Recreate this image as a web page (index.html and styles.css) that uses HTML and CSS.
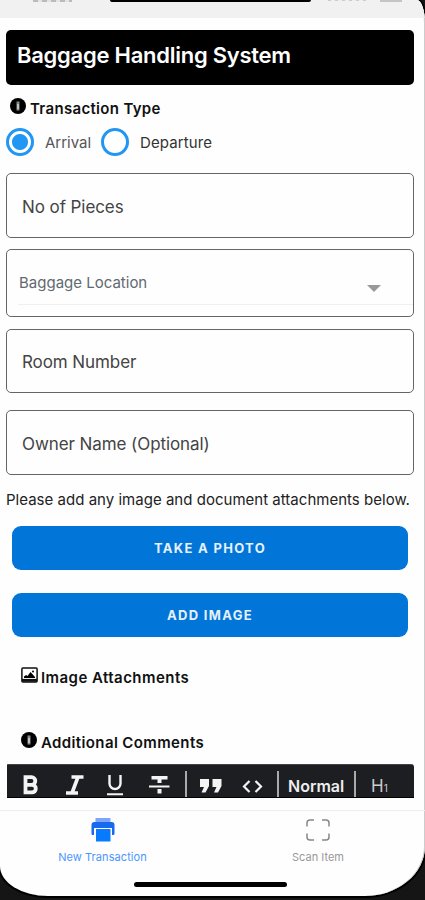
FILE: index.html
```html
<!DOCTYPE html>
<html lang="en">
<head>
<meta charset="utf-8">
<title>Baggage Handling System</title>
<link rel="stylesheet" href="styles.css">
</head>
<body>
<div class="screen">
  <div class="status"><i class="time"></i><i class="notch"></i><i class="signal"></i><i class="battery"></i></div>
  <main class="form">
    <h1 class="title">Baggage Handling System</h1>
    <h2 class="heading type-heading">
      <svg class="info" viewBox="0 0 16 16"><circle cx="8" cy="8" r="8"/><path d="M6.5 3.5h3v9h-3z" fill="#888"/><path d="M7.300 6h1.400v5H7.300z" fill="#ddd"/></svg>
      <span>Transaction Type</span>
    </h2>
    <div class="radios">
      <span class="radio checked"></span><span class="arrival">Arrival</span>
      <span class="radio"></span><span class="departure">Departure</span>
    </div>
    <div class="field pieces"><span>No of Pieces</span></div>
    <div class="field location"><div class="select"><span>Baggage Location</span><svg class="caret" viewBox="0 0 14 7"><path d="M0 0h14L7 7z" fill="#999"/></svg></div></div>
    <div class="field room"><span>Room Number</span></div>
    <div class="field owner"><span>Owner Name (Optional)</span></div>
    <p class="hint">Please add any image and document attachments below.</p>
    <div class="button photo"><span>TAKE A PHOTO</span></div>
    <div class="button add"><span>ADD IMAGE</span></div>
    <h2 class="heading images-heading">
      <svg class="picture" viewBox="0 0 17 16"><rect x=".9" y=".9" width="15.2" height="14.2" rx="1" fill="#fff" stroke="#111" stroke-width="1.5"/><path d="M3 11V9.500l2-1.500 1.500 1L9.500 5l4.500 5v1z"/><circle cx="12" cy="4.600" r="1"/><path d="M1 13.300h15" stroke="#111" stroke-width="2.800"/></svg>
      <span>Image Attachments</span>
    </h2>
    <h2 class="heading comments-heading">
      <svg class="info" viewBox="0 0 16 16"><circle cx="8" cy="8" r="8"/><path d="M6.5 3.5h3v9h-3z" fill="#888"/><path d="M7.300 6h1.400v5H7.300z" fill="#ddd"/></svg>
      <span>Additional Comments</span>
    </h2>
    <div class="toolbar">
      <svg class="tools" viewBox="0 0 178 34">
        <g fill="none" stroke="#f4f4f4">
          <path d="M18.5 14.2h6a3.200 3.200 0 0 1 0 7.600h-6zM18.500 21.800h6.500a3.500 3.500 0 0 1 0 7.600h-6.500z" stroke-width="3.800"/>
          <path d="M64.500 14h12M59 30h12M71 14l-6 16" stroke-width="3.600"/>
          <path d="M102.500 12v8.500a5.500 5.500 0 0 0 11 0V12" stroke-width="2.400"/>
          <path d="M100 31.300h16" stroke-width="2"/>
          <path d="M144.500 14.800h16" stroke-width="3.600"/>
          <path d="M152.500 15v5M152.500 26v4.500" stroke-width="4"/>
          <path d="M142 23.500h20.500" stroke-width="2.200"/>
        </g>
      </svg>
      <i class="divider"></i>
      <svg class="quote" viewBox="0 0 22 14"><path d="M0 0h9v7l-3.500 6.500h-4L4 8H0zM12.500 0h9v7L18 13.500h-4L16.500 8h-4z" fill="#f4f4f4"/></svg>
      <svg class="code" viewBox="0 0 21 13"><path d="M7.500 1 2 6.500 7.500 12M13.500 1 19 6.500 13.500 12" fill="none" stroke="#f4f4f4" stroke-width="2.200"/></svg>
      <i class="divider second"></i>
      <span class="normal">Normal</span>
      <i class="divider third"></i>
      <span class="h1">H<small>1</small></span>
    </div>
  </main>
  <nav class="tabs">
    <div class="tab active">
      <svg viewBox="0 0 24 24"><path d="M4.500 0h15v5h-15z" fill="#7da6f8"/><path d="M.5 7Q.5 4 3.500 4h17q3 0 3 3v9q0 1-1.500 1h-1v-7H3v7H2Q.5 17 .5 16z" fill="#1769ed"/><path d="M5 11h14.500v12.500H5z" fill="#087aff"/></svg>
      <span>New Transaction</span>
    </div>
    <div class="tab">
      <svg viewBox="0 0 24 24"><path d="M1 8.500V5Q1 2 4 2h4M16 2h4q3 0 3 3v3.500M23 15.500V19q0 3-3 3h-4M8 22H4q-3 0-3-3v-3.500" fill="none" stroke="#878787" stroke-width="1.500"/></svg>
      <span>Scan Item</span>
    </div>
  </nav>
  <i class="home"></i>
</div>
</body>
</html>
```
FILE: styles.css
```css
* { box-sizing: border-box; }
body { margin: 0; width: 425px; height: 900px; overflow: hidden; background: #151515; font-family: Inter, sans-serif; color: #111; }
.screen { width: 424.5px; height: 896px; display: flex; flex-direction: column; overflow: hidden; background: #fefefe; box-shadow: inset -1px 0 #ccc, 0 0 0 2px #000; border-radius: 0 8px 60px 48px / 0 24px 50px 30px; }
.status { height: 18px; flex: none; display: flex; align-items: flex-start; background: #f1f1f1; }
.time { width: 39px; height: 2px; margin-left: 33px; background: repeating-linear-gradient(90deg, #bbb 0 5px, #e4e4e4 5px 9px); }
.notch { width: 201px; height: 2px; margin-left: 38px; border-radius: 0 0 3px 3px; background: #000; }
.signal { width: 38px; height: 1px; margin-left: 17px; background: repeating-linear-gradient(90deg, #ccc 0 3px, #eee 3px 7px); }
.battery { width: 22px; height: 2px; margin-left: 14px; background: #c5c5c5; }
.form { height: 792px; flex: none; padding: 12px 10.5px 0 6px; display: flex; flex-direction: column; align-items: stretch; }
.form > * { flex: none; white-space: nowrap; }
.title { margin: 0; height: 55px; padding: 11px 11px 0; border-radius: 5px; background: #000; color: #fff; font-size: 22px; line-height: 28px; font-weight: 600; letter-spacing: -.26px; }
.heading { display: flex; align-items: center; margin: 0; height: 20px; font-size: 15px; font-weight: 600; letter-spacing: .32px; }
.info { width: 16px; height: 16px; flex: none; position: relative; top: -2px; }
.type-heading { margin-top: 13px; padding-left: 10px; padding-left: 4px; gap: 4px; }
.radios { display: flex; align-items: center; height: 28px; margin-top: 10px; font-size: 15px; }
.radio { width: 28px; height: 28px; border: 3px solid #2196f3; border-radius: 50%; background: #fff; }
.checked { background: radial-gradient(circle, #2196f3 0 7.500px, #fff 8.500px); }
.arrival { width: 45px; margin-left: 11px; margin-right: 11px; color: #555; }
.departure { margin-left: 11px; letter-spacing: .1px; color: #333; }
.field { border: 1px solid #656565; border-radius: 5px; display: flex; align-items: center; padding: 2px 0 0 15px; font-size: 17px; letter-spacing: -.08px; color: #444; }
.pieces { height: 65px; margin-top: 17px; }
.location { height: 68px; margin-top: 11px; padding: 0 0 0 11px; align-items: flex-start; font-size: 15px; letter-spacing: 0; color: #626970; }
.select { display: flex; align-items: center; justify-content: space-between; height: 55px; width: 100%; padding: 10px 32px 0 1px; border-bottom: 1px solid #f0f0f0; }
.caret { width: 14px; height: 7px; position: relative; top: 6px; }
.room { height: 64px; margin-top: 12px; }
.owner { height: 65px; margin-top: 17px; }
.hint { margin: 15px 0 0; height: 20px; line-height: 20px; font-size: 15px; letter-spacing: .02px; color: #222; }
.button { height: 44px; margin: 0 6px; display: flex; align-items: center; justify-content: center; border-radius: 9px; background: #0275d8; color: #e6f1fb; font-size: 13px; font-weight: 700; letter-spacing: 1.300px; }
.photo { margin-top: 16px; }
.add { margin-top: 23px; }
.images-heading { margin-top: 30px; padding-left: 15px; gap: 3px; letter-spacing: .45px; }
.picture { width: 17px; height: 16px; position: relative; top: -2px; }
.comments-heading { margin-top: 45px; padding-left: 15px; gap: 4px; letter-spacing: .38px; }
.toolbar { height: 34px; margin: 12px 0 0 1px; display: flex; align-items: flex-start; overflow: hidden; background: #1d1e22; border-top: 1px solid #444; border-bottom: 1px solid #000; border-radius: 1px 3px 0 0; color: #eee; }
.tools { width: 178px; height: 34px; flex: none; position: relative; top: -2px; }
.divider { width: 2px; height: 28px; margin-top: 6px; flex: none; background: #aaa; }
.quote { width: 22px; height: 14px; margin: 14px 0 0 13px; flex: none; }
.code { width: 21px; height: 13px; margin: 15px 0 0 20px; flex: none; }
.second { margin-left: 14px; }
.normal { width: 58px; margin-left: 9px; margin-top: 10px; font-size: 16px; line-height: 22px; font-weight: 600; }
.third { margin-left: 8px; }
.h1 { margin: 10px 0 0 15px; font-size: 17px; line-height: 22px; color: #ccc; }
.h1 small { font-size: 10px; }
.tabs { height: 61px; flex: none; border-top: 1px solid #eee; display: flex; }
.tab { flex: none; padding-top: 7px; display: flex; flex-direction: column; align-items: center; color: #999; font-size: 11px; }
.tab:first-child { width: 205px; }
.tab:last-child { width: 219px; padding-left: 7px; }
.tab svg { width: 24px; height: 24px; flex: none; }
.tab span { margin-top: 8px; line-height: 14px; white-space: nowrap; }
.active { color: #4b96ff; letter-spacing: .08px; }
.home { width: 153px; height: 5px; margin: 11px 0 0 134px; flex: none; border-radius: 3px; background: #000; }
```
